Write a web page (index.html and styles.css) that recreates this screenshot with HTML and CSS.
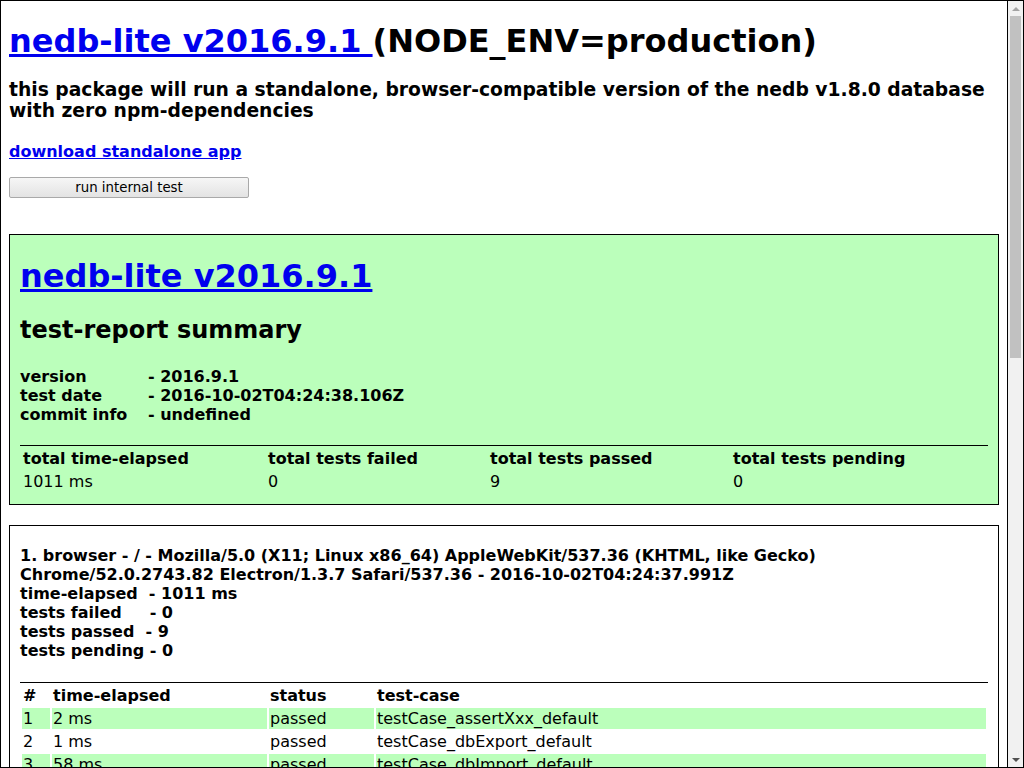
FILE: index.html
```html
<!DOCTYPE html>
<html>
<head>
<meta charset="utf-8">
<title>nedb-lite v2016.9.1</title>
<link rel="stylesheet" href="styles.css">
</head>
<body>
<div class="frame">
  <div class="page">
    <h1 class="title"><a href="#">nedb-lite v2016.9.1 </a>(NODE_ENV=production)</h1>
    <h3 class="desc">this package will run a standalone, browser-compatible version of the nedb v1.8.0 database with zero npm-dependencies</h3>
    <h4 class="download"><a href="#">download standalone app</a></h4>
    <button class="run-btn" type="button">run internal test</button>
    <div class="report summary">
      <h1 class="report-title"><a href="#">nedb-lite v2016.9.1</a></h1>
      <h2 class="report-sub">test-report summary</h2>
      <div class="meta">
        <div class="meta-row"><span class="meta-key">version</span><span>- 2016.9.1</span></div>
        <div class="meta-row"><span class="meta-key">test date</span><span>- 2016-10-02T04:24:38.106Z</span></div>
        <div class="meta-row"><span class="meta-key">commit info</span><span>- undefined</span></div>
      </div>
      <table class="totals">
        <colgroup><col class="t1"><col class="t2"><col class="t3"><col class="t4"></colgroup>
        <thead>
          <tr><th>total time-elapsed</th><th>total tests failed</th><th>total tests passed</th><th>total tests pending</th></tr>
        </thead>
        <tbody>
          <tr><td>1011 ms</td><td>0</td><td>9</td><td>0</td></tr>
        </tbody>
      </table>
    </div>
    <div class="report platform">
      <p class="platform-info">1. browser - / - Mozilla/5.0 (X11; Linux x86_64) AppleWebKit/537.36 (KHTML, like Gecko) Chrome/52.0.2743.82 Electron/1.3.7 Safari/537.36 - 2016-10-02T04:24:37.991Z<br>time-elapsed&nbsp;&nbsp;- 1011 ms<br>tests failed&nbsp;&nbsp;&nbsp;&nbsp;&nbsp;- 0<br>tests passed&nbsp;&nbsp;- 9<br>tests pending&nbsp;- 0</p>
      <table class="cases">
        <colgroup><col class="c1"><col class="c2"><col class="c3"><col class="c4"></colgroup>
        <thead>
          <tr><th>#</th><th>time-elapsed</th><th>status</th><th>test-case</th></tr>
        </thead>
        <tbody>
          <tr><td>1</td><td>2 ms</td><td>passed</td><td>testCase_assertXxx_default</td></tr>
          <tr><td>2</td><td>1 ms</td><td>passed</td><td>testCase_dbExport_default</td></tr>
          <tr><td>3</td><td>58 ms</td><td>passed</td><td>testCase_dbImport_default</td></tr>
        </tbody>
      </table>
    </div>
  </div>
  <div class="scrollbar">
    <div class="sb-btn"><span class="arrow-up"></span></div>
    <div class="sb-track"><div class="sb-thumb"></div></div>
    <div class="sb-btn"><span class="arrow-down"></span></div>
  </div>
</div>
</body>
</html>
```

FILE: styles.css
```css
html, body {
  margin: 0;
  padding: 0;
}

body {
  font-family: "DejaVu Sans", "Liberation Sans", sans-serif;
  color: #000;
  background: #fff;
}

a {
  color: #0000ee;
  text-decoration: underline;
}

.frame {
  display: flex;
  width: 1024px;
  height: 768px;
  box-sizing: border-box;
  border: 1px solid #000;
  overflow: hidden;
}

.page {
  flex: 1;
  min-width: 0;
  padding: 0 8px;
  border-right: 1px solid #000;
  overflow: hidden;
}

.title {
  font-size: 32px;
  font-weight: bold;
  margin: 21.44px 0 0;
}

.desc {
  font-size: 18.72px;
  font-weight: bold;
  margin: 18.72px 0 0;
}

.download {
  font-size: 16px;
  font-weight: bold;
  margin: 21px 0 0;
}

.run-btn {
  display: block;
  width: 240px;
  height: 21px;
  margin: 16px 0 0;
  padding: 0 6px;
  box-sizing: border-box;
  font-family: "DejaVu Sans", sans-serif;
  font-size: 13.33px;
  color: #000;
  border: 1px solid #a9a9a9;
  border-radius: 2px;
  background: linear-gradient(#f6f6f6, #e3e3e3);
}

.report {
  border: 1px solid #000;
  padding: 0 10px 10px;
}

.summary {
  background: #bbffbb;
  margin-top: 36px;
}

.platform {
  margin-top: 20px;
  font-weight: bold;
}

.report-title {
  font-size: 32px;
  margin: 21.44px 0;
}

.report-sub {
  font-size: 24px;
  margin: 19.92px 0;
}

.meta {
  font-size: 16px;
  font-weight: bold;
  margin-top: 23px;
}

.meta-key {
  display: inline-block;
  width: 128px;
}

table {
  width: 100%;
  border-top: 1px solid #000;
  border-collapse: separate;
  border-spacing: 2px;
  text-align: left;
  font-size: 16px;
}

th {
  font-weight: bold;
  padding: 1px;
}

td {
  font-weight: normal;
  padding: 1px;
}

.totals {
  table-layout: fixed;
  margin-top: 21px;
}

.t1 { width: 243px; }
.t2 { width: 220px; }
.t3 { width: 241px; }
.t4 { width: 254px; }

.platform-info {
  margin: 20px 0 0;
  font-size: 16px;
}

.cases {
  table-layout: fixed;
  margin-top: 22px;
}

.c1 { width: 28px; }
.c2 { width: 215px; }
.c3 { width: 105px; }
.c4 { width: auto; }

.cases tbody tr:nth-child(odd) td {
  background: #bbffbb;
}

.scrollbar {
  width: 15px;
  flex: none;
  background: #f1f1f1;
  display: flex;
  flex-direction: column;
}

.sb-btn {
  height: 15px;
  flex: none;
  display: flex;
  align-items: center;
  justify-content: center;
}

.sb-track {
  flex: 1;
}

.sb-thumb {
  height: 342px;
  margin: 0 2px;
  background: #c1c1c1;
}

.arrow-up {
  width: 0;
  height: 0;
  border-left: 4px solid transparent;
  border-right: 4px solid transparent;
  border-bottom: 4px solid #a3a3a3;
}

.arrow-down {
  width: 0;
  height: 0;
  border-left: 4px solid transparent;
  border-right: 4px solid transparent;
  border-top: 4px solid #505050;
}
```
